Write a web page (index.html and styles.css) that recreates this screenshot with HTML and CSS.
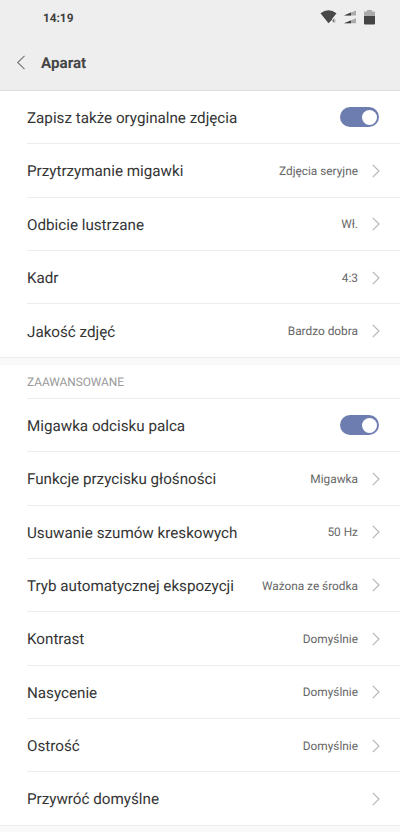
FILE: index.html
```html
<!DOCTYPE html>
<html lang="pl">
<head>
<meta charset="utf-8">
<title>Aparat</title>
<link rel="stylesheet" href="styles.css">
</head>
<body>
<header class="header">
  <div class="status">
    <span class="time">14:19</span>
    <div class="status-icons">
      <svg width="18" height="16" viewBox="0 0 18 16"><path d="M0.5 4.3Q8.5-1.9 16.5 4.3L12.2 9.7L11.8 11L8.5 14.2Z" fill="#484848"/><path d="M12 11.7L14.5 9.2V14.2Z" fill="#777"/><path d="M14.5 9.5L16.5 11.7L14.5 14Z" fill="#ccc"/></svg>
      <svg class="signal" width="12" height="14" viewBox="0 0 12 14"><path d="M0 5.5L12 .5V5.5ZM0 13.3L12 8.3V13.3Z" fill="#aaa"/><path d="M0 5.5L7 2.6V5.5ZM0 13.3L7 10.4V13.3Z" fill="#3c3c3c"/></svg>
      <svg width="11" height="15" viewBox="0 0 11 15"><path d="M0 1.5H3V0H8V1.5H11V6H0Z" fill="#aaa"/><path d="M0 6H11V13.5Q11 14.5 10 14.5H1Q0 14.5 0 13.5Z" fill="#444"/></svg>
    </div>
  </div>
  <div class="titlebar">
    <svg class="back" width="9" height="15" viewBox="0 0 9 15"><path d="M8.5 .8L1.7 7.5L8.5 14.2" fill="none" stroke="#777" stroke-width="1.1"/></svg>
    <h1 class="title">Aparat</h1>
  </div>
</header>
<main>
  <section class="group">
    <div class="row"><span class="label">Zapisz także oryginalne zdjęcia</span><span class="switch"></span></div>
    <div class="row"><span class="label">Przytrzymanie migawki</span><span class="value">Zdjęcia seryjne</span><svg class="chevron" viewBox="0 0 8 14"><path d="M.8 .8L7 7L.8 13.2"/></svg></div>
    <div class="row"><span class="label">Odbicie lustrzane</span><span class="value">Wł.</span><svg class="chevron" viewBox="0 0 8 14"><path d="M.8 .8L7 7L.8 13.2"/></svg></div>
    <div class="row"><span class="label">Kadr</span><span class="value">4:3</span><svg class="chevron" viewBox="0 0 8 14"><path d="M.8 .8L7 7L.8 13.2"/></svg></div>
    <div class="row"><span class="label">Jakość zdjęć</span><span class="value">Bardzo dobra</span><svg class="chevron" viewBox="0 0 8 14"><path d="M.8 .8L7 7L.8 13.2"/></svg></div>
  </section>
  <section class="group">
    <h2 class="group-title">ZAAWANSOWANE</h2>
    <div class="row"><span class="label">Migawka odcisku palca</span><span class="switch"></span></div>
    <div class="row"><span class="label">Funkcje przycisku głośności</span><span class="value">Migawka</span><svg class="chevron" viewBox="0 0 8 14"><path d="M.8 .8L7 7L.8 13.2"/></svg></div>
    <div class="row"><span class="label">Usuwanie szumów kreskowych</span><span class="value">50 Hz</span><svg class="chevron" viewBox="0 0 8 14"><path d="M.8 .8L7 7L.8 13.2"/></svg></div>
    <div class="row"><span class="label">Tryb automatycznej ekspozycji</span><span class="value">Ważona ze środka</span><svg class="chevron" viewBox="0 0 8 14"><path d="M.8 .8L7 7L.8 13.2"/></svg></div>
    <div class="row"><span class="label">Kontrast</span><span class="value">Domyślnie</span><svg class="chevron" viewBox="0 0 8 14"><path d="M.8 .8L7 7L.8 13.2"/></svg></div>
    <div class="row"><span class="label">Nasycenie</span><span class="value">Domyślnie</span><svg class="chevron" viewBox="0 0 8 14"><path d="M.8 .8L7 7L.8 13.2"/></svg></div>
    <div class="row"><span class="label">Ostrość</span><span class="value">Domyślnie</span><svg class="chevron" viewBox="0 0 8 14"><path d="M.8 .8L7 7L.8 13.2"/></svg></div>
    <div class="row"><span class="label">Przywróć domyślne</span><svg class="chevron" viewBox="0 0 8 14"><path d="M.8 .8L7 7L.8 13.2"/></svg></div>
  </section>
</main>
</body>
</html>
```
FILE: styles.css
```css
* { box-sizing: border-box; }
body {
  margin: 0;
  height: 832px;
  overflow: hidden;
  background: #f9f9f9;
  font-family: Roboto, "Liberation Sans", sans-serif;
  color: #343434;
  text-rendering: geometricPrecision;
}
.header {
  height: 91px;
  background: #eee;
  border-bottom: 1px solid #dedede;
}
.status {
  display: flex;
  justify-content: space-between;
  align-items: center;
  height: 36px;
  padding: 0 25px 0 43px;
}
.time { font-size: 11.8px; font-weight: 700; color: #404040; }
.status-icons { display: flex; align-items: center; height: 16px; margin-top: -2px; }
.signal { margin: 0 8px 0 6px; }
.titlebar {
  display: flex;
  align-items: center;
  height: 54px;
  padding: 0 0 1px 16px;
}
.title { margin: 0 0 0 16px; font-size: 15.2px; font-weight: 700; color: #454545; }
.group {
  background: #fff;
  padding-left: 27px;
  border-bottom: 1px solid #eee;
  margin-bottom: 7px;
}
.group-title {
  margin: 0;
  height: 34px;
  line-height: 34px;
  font-size: 11.85px;
  font-weight: 400;
  color: #999;
  border-bottom: 1px solid #ececec;
}
.row {
  display: flex;
  align-items: center;
  height: 53.35px;
  padding-right: 20px;
  border-bottom: 1px solid #ececec;
}
.row:last-child { border-bottom: 0; height: 52.6px; }
.group:last-child .row:last-child { height: 52.4px; }
.label { flex: 1; padding-top: 1.8px; font-size: 15.2px; line-height: 20px; white-space: nowrap; }
.value { padding-top: 1.2px; font-size: 11.85px; line-height: 16px; color: #666; margin-right: 14px; white-space: nowrap; }
.chevron { width: 8px; height: 14px; margin-top: .6px; }
.chevron path { fill: none; stroke: #b4b4b4; stroke-width: 1.1; }
.switch {
  display: flex;
  justify-content: flex-end;
  align-items: center;
  width: 39.5px;
  height: 20px;
  padding-right: 2.5px;
  margin-right: .8px;
  border-radius: 10px;
  background: #6e7db0;
}
.switch::after { content: ""; width: 15px; height: 15px; border-radius: 50%; background: #fff; }
```
